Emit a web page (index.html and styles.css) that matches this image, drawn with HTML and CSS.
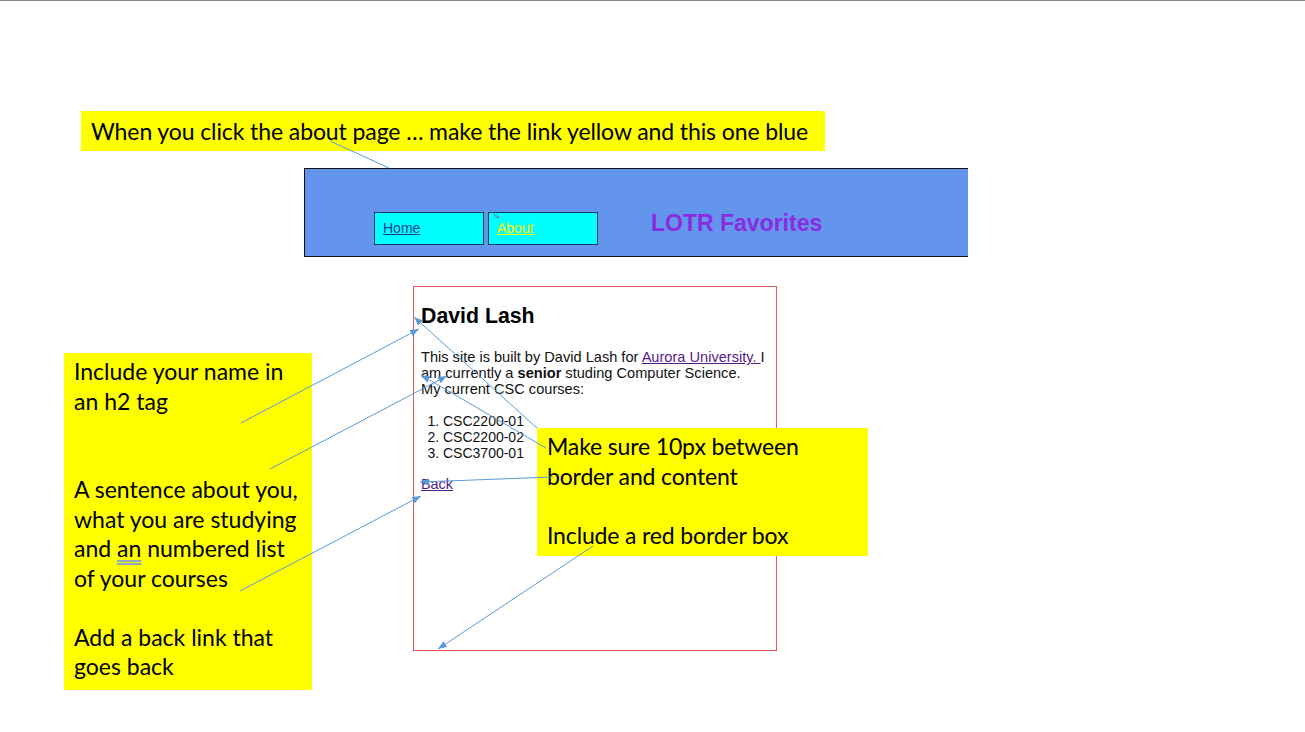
FILE: index.html
```html
<!DOCTYPE html>
<html lang="en">
<head>
<meta charset="utf-8">
<title>LOTR Favorites - About</title>
<link rel="stylesheet" href="styles.css">
</head>
<body>
<div class="slide">
  <div class="mock">
    <nav class="nav">
      <div class="tab"><a class="home" href="#">Home</a></div>
      <div class="tab tab-last"><a class="about" href="#">About</a></div>
      <div class="title">LOTR Favorites</div>
    </nav>
    <div class="card">
      <h2>David Lash</h2>
      <p>This site is built by David Lash for <a class="visited" href="#">Aurora University. </a>I am currently a <b>senior</b> studing Computer Science.<br>My current CSC courses:</p>
      <ol>
        <li>CSC2200-01</li>
        <li>CSC2200-02</li>
        <li>CSC3700-01</li>
      </ol>
      <p class="back"><a class="visited" href="#">Back</a></p>
    </div>
  </div>

  <div class="note note-top">When you click the about page … make the link yellow and this one blue</div>
  <div class="note note-left">Include your name in<br>an h2 tag<br><br><br>A sentence about you,<br>what you are studying<br>and <span class="dbl">an</span> numbered list<br>of your courses<br><br>Add a back link that<br>goes back</div>
  <div class="note note-right">Make sure 10px between<br>border and content<br><br>Include a red border box</div>

  <svg class="arrows" width="1305" height="732" viewBox="0 0 1305 732">
    <defs>
      <marker id="head" markerUnits="userSpaceOnUse" markerWidth="10" markerHeight="8" refX="9" refY="3.5" orient="auto">
        <path d="M0,0 L9,3.5 L0,7 z" fill="#5b9bd5"/>
      </marker>
    </defs>
    <g stroke="#5b9bd5" stroke-width="1" fill="none">
      <line x1="330" y1="141" x2="389" y2="168"/>
      <line x1="241" y1="423" x2="419" y2="329" marker-end="url(#head)"/>
      <line x1="270" y1="469" x2="447" y2="376" marker-end="url(#head)"/>
      <line x1="240" y1="591" x2="421" y2="496" marker-end="url(#head)"/>
      <line x1="537" y1="428" x2="414" y2="317" marker-end="url(#head)"/>
      <line x1="546" y1="448" x2="421" y2="375" marker-end="url(#head)"/>
      <line x1="553" y1="477" x2="420" y2="482" marker-end="url(#head)"/>
      <line x1="593" y1="546" x2="438" y2="649" marker-end="url(#head)"/>
    </g>
    <path d="M492,212 L501,218 L496,218 z" fill="#5b9bd5"/>
  </svg>
</div>
</body>
</html>
```

FILE: styles.css
```css
body {
  margin: 0;
  background: #ffffff;
}

.slide {
  position: relative;
  width: 1305px;
  height: 731px;
  border-top: 1px solid #8a8a8a;
  overflow: hidden;
  font-family: "Liberation Sans", Arial, sans-serif;
  background: #ffffff;
}

.mock {
  padding: 167px 0 0 304px;
}

.nav {
  box-sizing: border-box;
  width: 664px;
  height: 89px;
  background: #6495ed;
  border: 1px solid #111111;
  border-right: none;
  display: flex;
  align-items: flex-start;
  padding: 43px 0 0 69px;
}

.tab {
  box-sizing: border-box;
  width: 110px;
  height: 33px;
  background: #00ffff;
  border: 1px solid #163a5c;
  padding: 7px 0 0 8px;
  font-size: 14px;
  margin-right: 4px;
}

.tab-last {
  margin-right: 0;
}

.home {
  color: #1c3f94;
}

.about {
  color: #ffff00;
}

.title {
  margin: -2px 0 0 53px;
  font-size: 23px;
  font-weight: bold;
  color: #8a2be2;
}

.card {
  box-sizing: border-box;
  margin: 29px 0 0 109px;
  width: 364px;
  height: 365px;
  border: 1px solid #e5595c;
  padding: 10px 8px 10px 7px;
  font-size: 14px;
  color: #111111;
}

.card h2 {
  font-size: 21.3px;
  margin: 7.4px 0 20px;
  color: #000000;
}

.card p {
  margin: 0 0 16px;
  font-size: 14.6px;
  line-height: 16px;
}

.card ol {
  margin: 0 0 15px;
  padding-left: 22px;
}

.card .back {
  margin: 0;
  font-size: 14.4px;
}

.visited {
  color: #551a8b;
}

.note {
  position: absolute;
  box-sizing: border-box;
  background: #ffff00;
  color: #000000;
  font-family: Lato, "Open Sans", sans-serif;
  font-size: 23px;
  white-space: nowrap;
}

.note-top {
  left: 81px;
  top: 110px;
  width: 744px;
  height: 40px;
  line-height: 40px;
  padding: 0 10px;
  letter-spacing: -0.1px;
}

.note-left {
  left: 64px;
  top: 352px;
  width: 248px;
  height: 337px;
  line-height: 29.5px;
  padding: 4px 10px;
}

.note-right {
  left: 537px;
  top: 427px;
  width: 331px;
  height: 128px;
  line-height: 29.5px;
  padding: 4px 10px;
  letter-spacing: -0.15px;
}

.dbl {
  text-decoration: underline double;
  text-decoration-color: #8fa9bf;
  text-underline-offset: 3px;
}

.arrows {
  position: absolute;
  left: 0;
  top: -1px;
  pointer-events: none;
}
```
